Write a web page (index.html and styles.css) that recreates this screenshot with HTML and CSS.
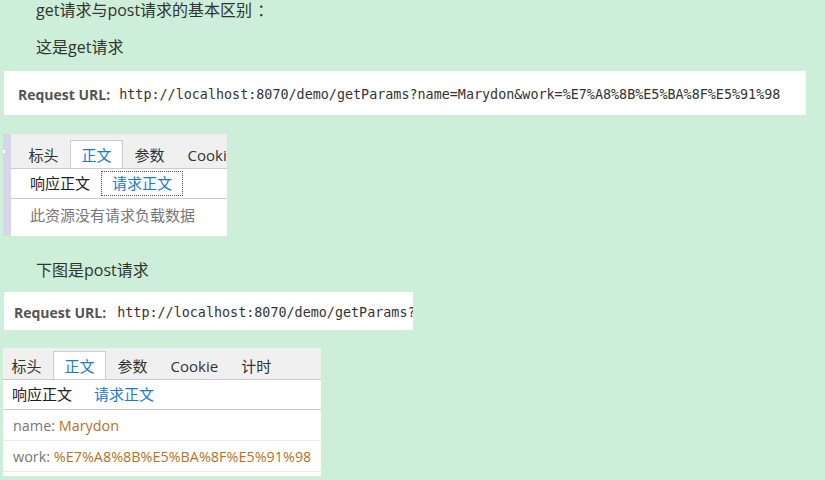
FILE: index.html
```html
<!DOCTYPE html>
<html lang="zh-CN">
<head>
<meta charset="utf-8">
<title>get请求与post请求</title>
<link rel="stylesheet" href="styles.css">
</head>
<body>
<p class="line line-title">get请求与post请求的基本区别<span class="fw-colon">：</span></p>
<p class="line line-sub">这是get请求</p>

<div class="url-box url-get">
  <span class="url-label">Request URL:</span>
  <span class="url-value">http://localhost:8070/demo/getParams?name=Marydon&amp;work=%E7%A8%8B%E5%BA%8F%E5%91%98</span>
</div>

<div class="panel panel-get">
  <div class="panel-strip"><span class="strip-dot"></span></div>
  <div class="panel-main">
    <div class="tabs">
      <span class="tab">标头</span>
      <span class="tab tab-active">正文</span>
      <span class="tab">参数</span>
      <span class="tab">Cookie</span>
    </div>
    <div class="subtabs">
      <span class="subtab">响应正文</span>
      <span class="subtab subtab-active subtab-focus">请求正文</span>
    </div>
    <div class="row row-empty">此资源没有请求负载数据</div>
  </div>
</div>

<p class="line line-caption">下图是post请求</p>

<div class="url-box url-post">
  <span class="url-label">Request URL:</span>
  <span class="url-value">http://localhost:8070/demo/getParams?name=Marydon</span>
</div>

<div class="panel panel-post">
  <div class="panel-main">
    <div class="tabs">
      <span class="tab">标头</span>
      <span class="tab tab-active">正文</span>
      <span class="tab">参数</span>
      <span class="tab">Cookie</span>
      <span class="tab">计时</span>
    </div>
    <div class="subtabs">
      <span class="subtab">响应正文</span>
      <span class="subtab subtab-active">请求正文</span>
    </div>
    <div class="row"><span class="key">name:</span> <span class="val">Marydon</span></div>
    <div class="row"><span class="key">work:</span> <span class="val">%E7%A8%8B%E5%BA%8F%E5%91%98</span></div>
  </div>
</div>
</body>
</html>
```

FILE: styles.css
```css
* { box-sizing: border-box; }

body {
  margin: 0;
  background: #cdeed8;
  font-family: "Open Sans", "Noto Sans CJK SC", sans-serif;
  color: #333;
  width: 825px;
  height: 480px;
  overflow: hidden;
}

.line {
  margin: 0;
  padding-left: 36px;
  height: 20px;
  line-height: 20px;
  font-size: 16px;
  white-space: nowrap;
}

.fw-colon { padding-left: 5px; }

.line-sub { margin-top: 17px; }
.line-caption { margin-top: 24px; }

.url-box {
  margin-left: 4px;
  background: #fff;
  display: flex;
  align-items: center;
  white-space: nowrap;
  overflow: hidden;
  padding-top: 3px;
}

.url-get {
  margin-top: 14px;
  width: 802px;
  height: 44px;
  padding-left: 14px;
}

.url-post {
  margin-top: 12px;
  width: 409px;
  height: 38px;
  padding-left: 10px;
}

.url-label {
  font-size: 14px;
  font-weight: 700;
  color: #555;
  margin-right: 9px;
}

.url-post .url-label { margin-right: 11px; }

.url-value {
  font-family: "DejaVu Sans Mono", monospace;
  font-size: 13.4px;
  color: #333;
}

.panel {
  margin-left: 3px;
  display: flex;
  overflow: hidden;
  background: #fff;
}

.panel-get {
  margin-top: 19px;
  width: 224px;
  height: 102px;
}

.panel-post {
  margin-top: 18px;
  width: 318px;
  height: 128px;
}

.panel-strip {
  width: 8px;
  flex: none;
  background: #d6d6e6;
  position: relative;
}

.strip-dot {
  position: absolute;
  left: 0;
  top: 16px;
  width: 2px;
  height: 3px;
  background: #fff;
}

.panel-main {
  flex: 1;
  min-width: 0;
}

.tabs {
  display: flex;
  align-items: flex-end;
  background: #f0f0f0;
  border-bottom: 1px solid #cacadc;
  padding-top: 3px;
  white-space: nowrap;
  font-size: 15px;
  overflow: hidden;
}

.panel-get .tabs { padding-top: 6px; padding-left: 6px; }
.panel-post .tabs { margin-left: -3px; }

.tab {
  flex: none;
  height: 29px;
  line-height: 28px;
  padding: 0 10.5px;
  border: 1px solid transparent;
  border-bottom: none;
  margin-bottom: -1px;
  color: #333;
}

.tab-active {
  background: #fff;
  border-color: #cacadc;
  color: #1a7ad0;
}

.subtabs {
  display: flex;
  align-items: center;
  height: 30px;
  border-bottom: 1px solid #cacadc;
  font-size: 15px;
  white-space: nowrap;
}

.panel-get .subtabs { padding-left: 8px; height: 30px; }
.panel-post .subtabs { margin-left: -2px; }

.subtab {
  height: 25px;
  line-height: 23px;
  padding: 0 10px;
  border: 1px dotted transparent;
  color: #222;
}

.subtab-active { color: #1a7ad0; }
.subtab-focus { border-color: #555; }

.row {
  height: 31px;
  line-height: 31px;
  padding-left: 10px;
  font-size: 14.4px;
  border-bottom: 1px solid #ebebeb;
  white-space: nowrap;
}

.row-empty {
  border-bottom: none;
  padding-left: 19px;
  height: 37px;
  line-height: 32px;
  font-size: 15px;
  color: #777;
}

.key { color: #777; }
.val { color: #b5731e; }
```
